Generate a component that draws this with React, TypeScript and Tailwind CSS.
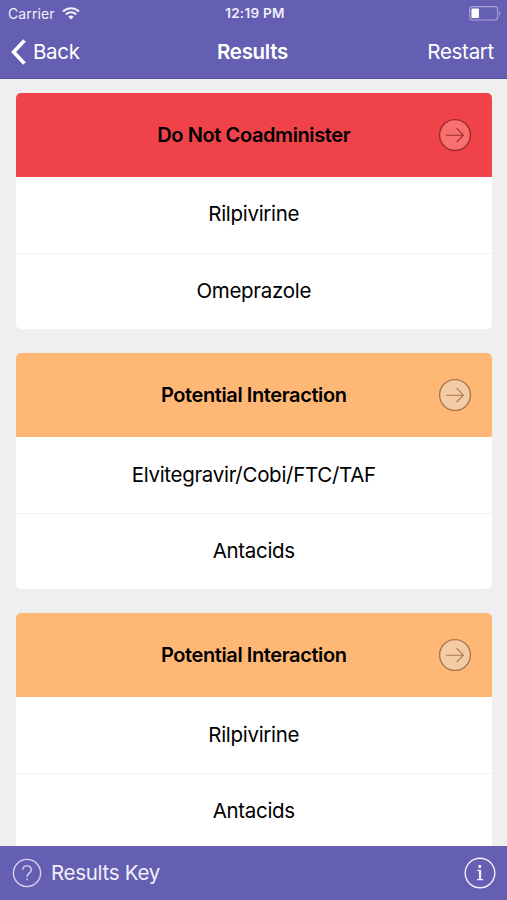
import React from 'react';

type Severity = 'contraindicated' | 'potential';

interface InteractionResult {
  id: number;
  severity: Severity;
  drugs: { name: string; tracking: string }[];
}

const severityStyles = {
  contraindicated: {
    label: 'Do Not Coadminister',
    header: 'bg-[#ef4249] tracking-[-0.4px]',
    arrow: 'text-[#9c2a30]',
    fill: '#f9716f',
  },
  potential: {
    label: 'Potential Interaction',
    header: 'bg-[#ffb775] tracking-[-0.4px]',
    arrow: 'text-[#a9794e]',
    fill: '#f3cba4',
  },
};

const results: InteractionResult[] = [
  {
    id: 1,
    severity: 'contraindicated',
    drugs: [
      { name: 'Rilpivirine', tracking: 'tracking-[-0.3px]' },
      { name: 'Omeprazole', tracking: 'tracking-[-0.3px]' },
    ],
  },
  {
    id: 2,
    severity: 'potential',
    drugs: [
      { name: 'Elvitegravir/Cobi/FTC/TAF', tracking: 'tracking-[-0.3px]' },
      { name: 'Antacids', tracking: 'tracking-[-0.3px]' },
    ],
  },
  {
    id: 3,
    severity: 'potential',
    drugs: [
      { name: 'Rilpivirine', tracking: 'tracking-[-0.3px]' },
      { name: 'Antacids', tracking: 'tracking-[-0.3px]' },
    ],
  },
];

const WifiIcon = () => (
  <svg width="18" height="13" viewBox="0 0 18 13" fill="none" stroke="currentColor">
    <path d="M1 4.6a11.4 11.4 0 0 1 16 0" strokeWidth="2.1" />
    <path d="M3.8 7.5a7.4 7.4 0 0 1 10.4 0" strokeWidth="2" />
    <path d="M9 12.4 6.3 9.7a3.9 3.9 0 0 1 5.4 0z" fill="currentColor" stroke="none" />
  </svg>
);

const BatteryIcon = () => (
  <svg width="33" height="15" viewBox="0 0 33 15" fill="none">
    <rect x="0.6" y="0.6" width="28" height="13.4" rx="3" stroke="#a9a5d8" strokeWidth="1.1" />
    <rect x="2.4" y="2.6" width="7.6" height="9.4" rx="1" fill="#fff" />
    <path d="M30.3 5v4.8c1.8-.8 1.8-4 0-4.8z" fill="#a9a5d8" />
  </svg>
);

const ArrowCircle = ({ className, fill }: { className: string; fill: string }) => (
  <svg className={className} width="34" height="34" viewBox="0 0 34 34" fill="none" stroke="currentColor">
    <circle cx="17" cy="17" r="15.4" fill={fill} strokeWidth="1.4" />
    <path d="M8 17.2h17M18.6 10.2l6.8 7-6.8 7" strokeWidth="1.1" />
  </svg>
);

const ResultCard = ({ result }: { result: InteractionResult }) => {
  const style = severityStyles[result.severity];

  return (
    <section className="shrink-0 overflow-hidden rounded-[5px] bg-white text-black">
      <div className={`grid h-[84px] grid-cols-[54px_1fr_54px] items-center text-center text-[20px] font-semibold ${style.header}`}>
        <span />
        <h2>{style.label}</h2>
        <button type="button" aria-label="Show details">
          <ArrowCircle className={style.arrow} fill={style.fill} />
        </button>
      </div>
      {result.drugs.map((drug, index) => (
        <div
          key={drug.name}
          className={`flex h-[76px] items-center justify-center text-[20.5px] ${drug.tracking} ${index > 0 ? 'border-t border-[#f1f1f2]' : ''}`}
        >
          {drug.name}
        </div>
      ))}
    </section>
  );
};

const App: React.FC = () => {
  return (
    <div className="flex h-[900px] w-[507px] flex-col overflow-hidden bg-[#efefef] font-['Inter','Liberation_Sans',sans-serif]">
      <header className="h-[79px] shrink-0 border-b border-[#554fa5] bg-[#645fb2] text-white">
        <div className="grid h-[27px] grid-cols-3 items-center pl-2 pr-[5px] text-[#f0effa]">
          <div className="flex items-center gap-[7px] text-[14px] tracking-[0.1px]">
            <span>Carrier</span>
            <WifiIcon />
          </div>
          <span className="text-center text-[13.5px] font-semibold tracking-[0.3px]">12:19 PM</span>
          <div className="flex justify-end">
            <BatteryIcon />
          </div>
        </div>
        <nav className="grid h-[50px] grid-cols-3 items-center pl-[11px] pr-[13px] text-[20.5px] tracking-[-0.3px]">
          <button type="button" className="flex items-center gap-[7px]">
            <svg width="15" height="26" viewBox="0 0 15 26" fill="none" stroke="currentColor" strokeWidth="3.6">
              <path d="M13.5 1.5 2.6 13l10.9 11.5" />
            </svg>
            <span>Back</span>
          </button>
          <h1 className="text-center font-semibold">Results</h1>
          <button type="button" className="text-right">Restart</button>
        </nav>
      </header>

      <main className="flex min-h-0 flex-1 flex-col gap-[24.3px] overflow-hidden pl-[15.5px] pr-[15px] pt-[13.6px]">
        {results.map((result) => (
          <ResultCard key={result.id} result={result} />
        ))}
      </main>

      <footer className="flex h-[54px] shrink-0 items-center justify-between bg-[#645fb2] pl-3 pr-[11px] text-[#f1f0fb]">
        <button type="button" className="flex items-center gap-[9px] text-[20.5px] tracking-[-0.3px]">
          <svg width="30" height="30" viewBox="0 0 30 30" fill="none" stroke="#d6d3f1" strokeWidth="1.4">
            <circle cx="15" cy="15" r="13.6" />
            <path d="M10.8 11.8c0-5.2 8.5-5.2 8.5-.1 0 3.6-4.2 3.2-4.2 7" />
            <path d="M15.1 20.5v1.8" />
          </svg>
          <span>Results Key</span>
        </button>
        <button type="button" aria-label="Info">
          <svg width="32" height="32" viewBox="0 0 32 32" fill="none" stroke="currentColor">
            <circle cx="16" cy="16" r="14.8" strokeWidth="1.4" />
            <circle cx="15.8" cy="9.4" r="1.6" fill="currentColor" stroke="none" />
            <path d="M13.2 13.4h3.2v9M13 22.7h6.2" strokeWidth="1.3" />
            <path d="M16 13.2v9.4" strokeWidth="2.2" />
          </svg>
        </button>
      </footer>
    </div>
  );
};

export default App;
